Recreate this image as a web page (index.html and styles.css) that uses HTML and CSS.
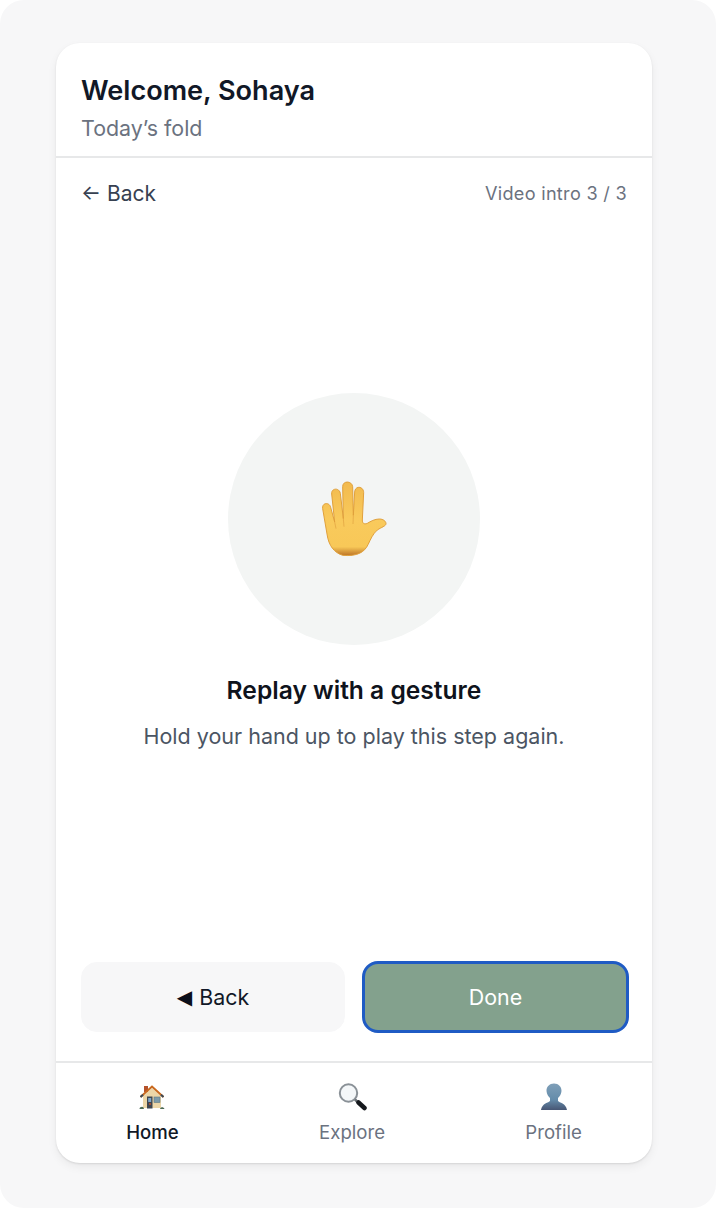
FILE: index.html
```html
<!DOCTYPE html>
<html lang="en">
<head>
<meta charset="utf-8">
<title>Today's fold</title>
<link rel="stylesheet" href="styles.css">
</head>
<body>
<div class="stage">
  <main class="card">
    <header class="head">
      <h1 class="title">Welcome, Sohaya</h1>
      <p class="sub">Today’s fold</p>
    </header>
    <section class="content">
      <div class="topline">
        <span class="back-link">← Back</span>
        <span class="step">Video intro 3 / 3</span>
      </div>
      <div class="hero">
        <div class="circle">
          <svg class="hand" viewBox="-3 -3 330 300" width="110" height="100" aria-hidden="true">
            <defs>
              <linearGradient id="skin" x1="0" y1="0" x2="0" y2="1">
                <stop offset="0" stop-color="#f2ba4e"/>
                <stop offset="0.5" stop-color="#f9ca5c"/>
                <stop offset="0.88" stop-color="#f8c858"/>
                <stop offset="1" stop-color="#bd7426"/>
              </linearGradient>
            </defs>
            <path fill="url(#skin)" stroke="#e0a03c" stroke-width="3" d="M128 256C103 248 86 228 81 192L68 116C65 98 88 95 92 112L104 156L95 72C93 54 118 52 121 70L130 146L128 50C128 31 156 32 158 50L160 136L164 66C165 46 191 48 191 68L187 150C187 160 192 164 202 160C212 154 224 147 238 147C250 147 258 154 258 161C258 168 244 172 232 180C218 192 212 208 204 224C194 246 172 260 128 256Z"/>
            <path fill="none" stroke="#e5a844" stroke-width="2.500" d="M104 156 108 176M130 146 132 170M160 136 159 162"/>
          </svg>
        </div>
        <h2 class="hero-title">Replay with a gesture</h2>
        <p class="hero-text">Hold your hand up to play this step again.</p>
      </div>
      <div class="actions">
        <button class="btn btn-back" type="button"><span class="tri">◀</span>Back</button>
        <button class="btn btn-done" type="button">Done</button>
      </div>
    </section>
    <nav class="tabs">
      <div class="tab tab-active">
        <svg class="tab-icon" viewBox="0 0 28 28" aria-hidden="true">
          <rect x="6" y="3" width="4" height="6" fill="#b5522b"/>
          <path d="M5 13 14 5l9 8v12H5Z" fill="#ecd6a8"/>
          <path d="M2.500 14 14 3.500 25.500 14" fill="none" stroke="#c9691f" stroke-width="2"/>
          <path d="M2.500 14 5 11.700M23 11.700 25.500 14" stroke="#3d4a55" stroke-width="2"/>
          <rect x="9" y="13.500" width="5.500" height="12" fill="#3f4650"/>
          <rect x="10.200" y="15" width="3" height="4" fill="#7ea6c9"/>
          <circle cx="12" cy="21" r="0.900" fill="#d0562a"/>
          <rect x="16" y="14" width="6" height="5.500" fill="#7d9aa8" stroke="#5f7a88" stroke-width="0.600"/>
          <path d="M1.500 26c0-2 3-3 4-1.500l.5 1.500ZM22 26c.5-2 3.500-2.500 4.500 0Z" fill="#4d6a55"/>
        </svg>
        <span>Home</span>
      </div>
      <div class="tab">
        <svg class="tab-icon tab-icon-wide" viewBox="0 0 29 28" aria-hidden="true">
          <circle cx="10.500" cy="10" r="8.700" fill="#f4f7f9" stroke="#8a9197" stroke-width="2"/>
          <path d="M17 16.500 20 19.500" stroke="#6a7075" stroke-width="2.500"/>
          <path d="M20.500 19.500 26.500 25" stroke="#15181c" stroke-width="4.500" stroke-linecap="round"/>
        </svg>
        <span>Explore</span>
      </div>
      <div class="tab">
        <svg class="tab-icon" viewBox="0 0 28 28" aria-hidden="true">
          <defs>
            <linearGradient id="bust" x1="0" y1="0" x2="0" y2="1">
              <stop offset="0" stop-color="#7f9fb8"/>
              <stop offset="0.6" stop-color="#648cab"/>
              <stop offset="1" stop-color="#475674"/>
            </linearGradient>
          </defs>
          <path fill="url(#bust)" d="M14 .5c4.500 0 7.700 3.200 7.500 7.500-.2 3.200-2 5.500-3.500 7v3c1.200 1.700 8 2.200 9 9H1c1-6.800 7.800-7.300 9-9v-3C8.500 13.500 6.700 11.200 6.500 8 6.300 3.700 9.500.5 14 .5Z"/>
        </svg>
        <span>Profile</span>
      </div>
    </nav>
  </main>
</div>
</body>
</html>
```

FILE: styles.css
```css
* { box-sizing: border-box; }
html, body { margin: 0; padding: 0; background: #fff; }
body { font-family: Inter, "Liberation Sans", sans-serif; }
.stage {
  width: 716px; height: 1208px;
  padding: 43px 64px 45px 56px;
  background: #f7f7f8;
  border-radius: 24px;
}
.card {
  width: 596px; height: 1120px;
  background: #fff;
  border-radius: 24px;
  box-shadow: 0 1px 2px rgba(0,0,0,.1), 0 4px 10px rgba(0,0,0,.06);
  display: flex; flex-direction: column;
  overflow: hidden;
}
.head {
  padding: 30px 25px 14px;
  height: 115px;
  border-bottom: 2px solid #e7e8e9;
  flex: none;
}
.title { margin: 0; font-size: 27.1px; line-height: 36px; font-weight: 600; color: #111827; }
.sub { margin: 5px 0 0; font-size: 21.4px; line-height: 28px; color: #6b7280; }
.content { flex: 1; display: flex; flex-direction: column; padding: 0 23px 0 25px; min-height: 0; }
.topline { display: flex; justify-content: space-between; align-items: center; height: 70px; }
.back-link { font-size: 21px; color: #374151; }
.step { font-size: 18.1px; color: #6b7280; letter-spacing: .3px; padding-right: 2px; }
.hero { flex: 1; display: flex; flex-direction: column; align-items: center; padding: 165px 0 0; margin-right: 2px; }
.circle { width: 252px; height: 252px; border-radius: 50%; background: #f3f5f4; display: flex; align-items: center; justify-content: center; }
.hand { display: block; }
.hero-title { margin: 29px 0 0; font-size: 24.6px; line-height: 32px; font-weight: 600; color: #0f131c; }
.hero-text { margin: 15px 0 0; font-size: 21.5px; line-height: 30px; color: #4b5563; }
.actions { display: flex; gap: 17px; height: 72px; margin-bottom: 28px; flex: none; }
.btn { border-radius: 16px; font: inherit; font-size: 21.4px; display: flex; align-items: center; justify-content: center; }
.btn-back { width: 264px; flex: none; background: #f7f7f8; border: 1px solid #f7f7f8; color: #111827; margin: 1px 0; }
.tri { font-family: "DejaVu Sans", sans-serif; color: #0b0f1a; margin-right: 7px; font-size: 20px; }
.btn-done { flex: 1; background: #83a18d; color: #fff; border: 3px solid #1f5bc4; }
.tabs { height: 102px; flex: none; border-top: 2px solid #e7e8e9; display: flex; justify-content: space-around; }
.tab { display: flex; flex-direction: column; align-items: center; padding-top: 20px; font-size: 18.6px; color: #6b7280; }
.tab-active { color: #111827; font-weight: 500; }
.tab-icon { width: 28px; height: 28px; margin-bottom: 10px; display: block; flex: none; }
.tab-icon-wide { width: 29px; }
```
